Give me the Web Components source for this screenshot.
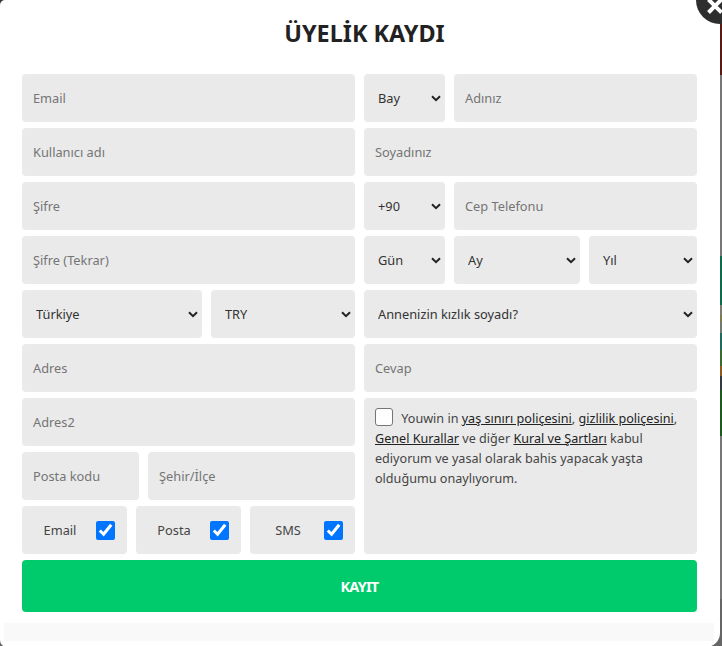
<!DOCTYPE html>
<html lang="tr">
<head>
<meta charset="utf-8">
<title>Üyelik Kaydı</title>
<style>
  html, body { margin: 0; height: 100%; overflow: hidden; }
  body {
    font-family: "Noto Sans", "Open Sans", sans-serif;
    background: linear-gradient(#333 0 24px, #5a1a14 24px 75px, #777 75px 256px, #0d6b4c 256px 305px, #7c7c70 305px 315px, #7c7c50 315px 322px, #707a70 322px 333px, #1f6a5a 333px 350px, #3a6a30 350px 366px, #8a5a20 366px 376px, #333a40 376px 390px, #1d5a1d 390px 436px, #777 436px 599px, #666 599px);
  }
</style>
</head>
<body>
<register-modal>
  <form-row>
    <text-field placeholder="Email"></text-field>
    <form-split cols="81px 1fr">
      <select-field options="Bay"></select-field>
      <text-field placeholder="Adınız"></text-field>
    </form-split>
  </form-row>
  <form-row>
    <text-field placeholder="Kullanıcı adı"></text-field>
    <text-field placeholder="Soyadınız"></text-field>
  </form-row>
  <form-row>
    <text-field placeholder="Şifre" type="password"></text-field>
    <form-split cols="81px 1fr">
      <select-field options="+90"></select-field>
      <text-field placeholder="Cep Telefonu"></text-field>
    </form-split>
  </form-row>
  <form-row>
    <text-field placeholder="Şifre (Tekrar)" type="password"></text-field>
    <form-split cols="81px 126px 1fr">
      <select-field options="Gün"></select-field>
      <select-field options="Ay"></select-field>
      <select-field options="Yıl"></select-field>
    </form-split>
  </form-row>
  <form-row>
    <form-split cols="180px 1fr">
      <select-field options="Türkiye"></select-field>
      <select-field options="TRY"></select-field>
    </form-split>
    <select-field options="Annenizin kızlık soyadı?"></select-field>
  </form-row>
  <form-row>
    <text-field placeholder="Adres"></text-field>
    <text-field placeholder="Cevap"></text-field>
  </form-row>
  <form-row>
    <form-stack>
      <text-field placeholder="Adres2"></text-field>
      <form-split cols="117px 1fr">
        <text-field placeholder="Posta kodu"></text-field>
        <text-field placeholder="Şehir/İlçe"></text-field>
      </form-split>
      <form-split cols="1fr 1fr 1fr">
        <check-field label="Email"></check-field>
        <check-field label="Posta"></check-field>
        <check-field label="SMS"></check-field>
      </form-split>
    </form-stack>
    <terms-box>
      Youwin in <a>yaş sınırı poliçesini</a>, <a>gizlilik poliçesini</a>,<br><a>Genel Kurallar</a> ve diğer <a>Kural ve Şartları</a> kabul<br>ediyorum ve yasal olarak bahis yapacak yaşta<br>olduğumu onaylıyorum.
    </terms-box>
  </form-row>
</register-modal>

<script>
const fieldBase = `
  width: 100%;
  height: 48px;
  box-sizing: border-box;
  border: 0;
  border-radius: 4px;
  background-color: #eaeaea;
  font-family: inherit;
  font-size: 12.8px;
  color: #444;
  outline: none;
`

class TextField extends HTMLElement {
  constructor() {
    super()
    this.attachShadow({ mode: 'open' })
    this.shadowRoot.innerHTML = `
      <style>
        :host{ display: block; min-width: 0; }
        input{ ${fieldBase} padding: 0 11px; display: block; }
        input::placeholder{ color: #757575; opacity: 1; }
      </style>
      <input type="${this.getAttribute('type') || 'text'}" placeholder="${this.getAttribute('placeholder')}">
    `
  }
}

class SelectField extends HTMLElement {
  constructor() {
    super()
    this.attachShadow({ mode: 'open' })
    const options = this.getAttribute('options').split('|')
    this.shadowRoot.innerHTML = `
      <style>
        :host{ display: block; min-width: 0; position: relative; }
        select{ ${fieldBase} appearance: none; padding: 0 14px; display: block; color: #333; }
        svg{ position: absolute; right: 4px; top: 21px; pointer-events: none; }
      </style>
      <select>${options.map(item => `<option>${item}</option>`).join('')}</select>
      <svg width="10" height="7" viewBox="0 0 10 7"><path d="M1 1.2 5 5.2 9 1.2" fill="none" stroke="#222" stroke-width="2"/></svg>
    `
  }
}

class CheckField extends HTMLElement {
  constructor() {
    super()
    this.attachShadow({ mode: 'open' })
    this.shadowRoot.innerHTML = `
      <style>
        :host{ display: block; min-width: 0; }
        label{
          height: 48px;
          display: grid;
          grid-template-columns: 74px 19px;
          align-items: center;
          border-radius: 4px;
          background-color: #eaeaea;
          font-size: 12.8px;
          color: #444;
        }
        span{ text-align: center; padding-left: 2px; }
        input{ width: 19px; height: 19px; margin: 0; }
      </style>
      <label><span>${this.getAttribute('label')}</span><input type="checkbox" checked></label>
    `
  }
}

class TermsBox extends HTMLElement {
  constructor() {
    super()
    this.attachShadow({ mode: 'open' })
    this.shadowRoot.innerHTML = `
      <style>
        :host{
          display: block;
          box-sizing: border-box;
          padding: 10px 11px;
          border-radius: 4px;
          background-color: #eaeaea;
          font-size: 12.6px;
          line-height: 20px;
          color: #444;
        }
        input{
          appearance: none;
          width: 18px;
          height: 18px;
          margin: 0 5px 0 0;
          box-sizing: border-box;
          border: 1px solid #767676;
          border-radius: 3px;
          background: #fff;
          vertical-align: -3px;
        }
        ::slotted(a){ color: #222; text-decoration: underline; }
      </style>
      <input type="checkbox"><slot></slot>
    `
  }
}

class FormRow extends HTMLElement {
  constructor() {
    super()
    this.attachShadow({ mode: 'open' })
    this.shadowRoot.innerHTML = `
      <style>
        :host{ display: grid; grid-template-columns: 333px 333px; column-gap: 9px; }
      </style>
      <slot></slot>
    `
  }
}

class FormSplit extends HTMLElement {
  constructor() {
    super()
    this.attachShadow({ mode: 'open' })
    this.shadowRoot.innerHTML = `
      <style>
        :host{ display: grid; grid-template-columns: ${this.getAttribute('cols')}; column-gap: 9px; }
      </style>
      <slot></slot>
    `
  }
}

class FormStack extends HTMLElement {
  constructor() {
    super()
    this.attachShadow({ mode: 'open' })
    this.shadowRoot.innerHTML = `
      <style>
        :host{ display: grid; row-gap: 6px; }
      </style>
      <slot></slot>
    `
  }
}

class RegisterModal extends HTMLElement {
  constructor() {
    super()
    this.attachShadow({ mode: 'open' })
    this.shadowRoot.innerHTML = `
      <style>
        :host{
          display: block;
          position: relative;
          width: 720px;
          height: 647px;
          box-sizing: border-box;
          padding: 0 6px 0 4px;
          background-color: #fff;
          border-radius: 5px 0 14px 7px;
        }
        h1{
          margin: 0;
          height: 74px;
          box-sizing: border-box;
          padding: 15px 0 0 11px;
          font-size: 23.4px;
          line-height: 36px;
          font-weight: 700;
          text-align: center;
          color: #222;
        }
        .rows{ display: grid; row-gap: 6px; padding-left: 18px; }
        button{
          display: block;
          width: 675px;
          height: 52px;
          border: 0;
          border-radius: 4px;
          background-color: #00cb6c;
          color: #fff;
          font-family: inherit;
          font-size: 14.5px;
          letter-spacing: -0.8px;
          font-weight: 700;
        }
        .foot{ height: 18px; margin-top: 11px; background-color: #f9f9f9; }
        .close{
          position: absolute;
          left: 696px;
          top: -24px;
          width: 48px;
          height: 48px;
          border-radius: 50%;
          background-color: #2e2e2e;
        }
        .close svg{ position: absolute; left: 7px; top: 18px; }
      </style>
      <h1>ÜYELİK KAYDI</h1>
      <div class="rows">
        <slot></slot>
        <button type="button">KAYIT</button>
      </div>
      <div class="foot"></div>
      <div class="close">
        <svg width="24" height="24" viewBox="0 0 24 24"><path d="M5.5 5.5 18.500 18.500M18.500 5.500 5.500 18.500" stroke="#fff" stroke-width="4"/></svg>
      </div>
    `
  }
}

customElements.define('text-field', TextField)
customElements.define('select-field', SelectField)
customElements.define('check-field', CheckField)
customElements.define('terms-box', TermsBox)
customElements.define('form-row', FormRow)
customElements.define('form-split', FormSplit)
customElements.define('form-stack', FormStack)
customElements.define('register-modal', RegisterModal)
</script>
</body>
</html>
